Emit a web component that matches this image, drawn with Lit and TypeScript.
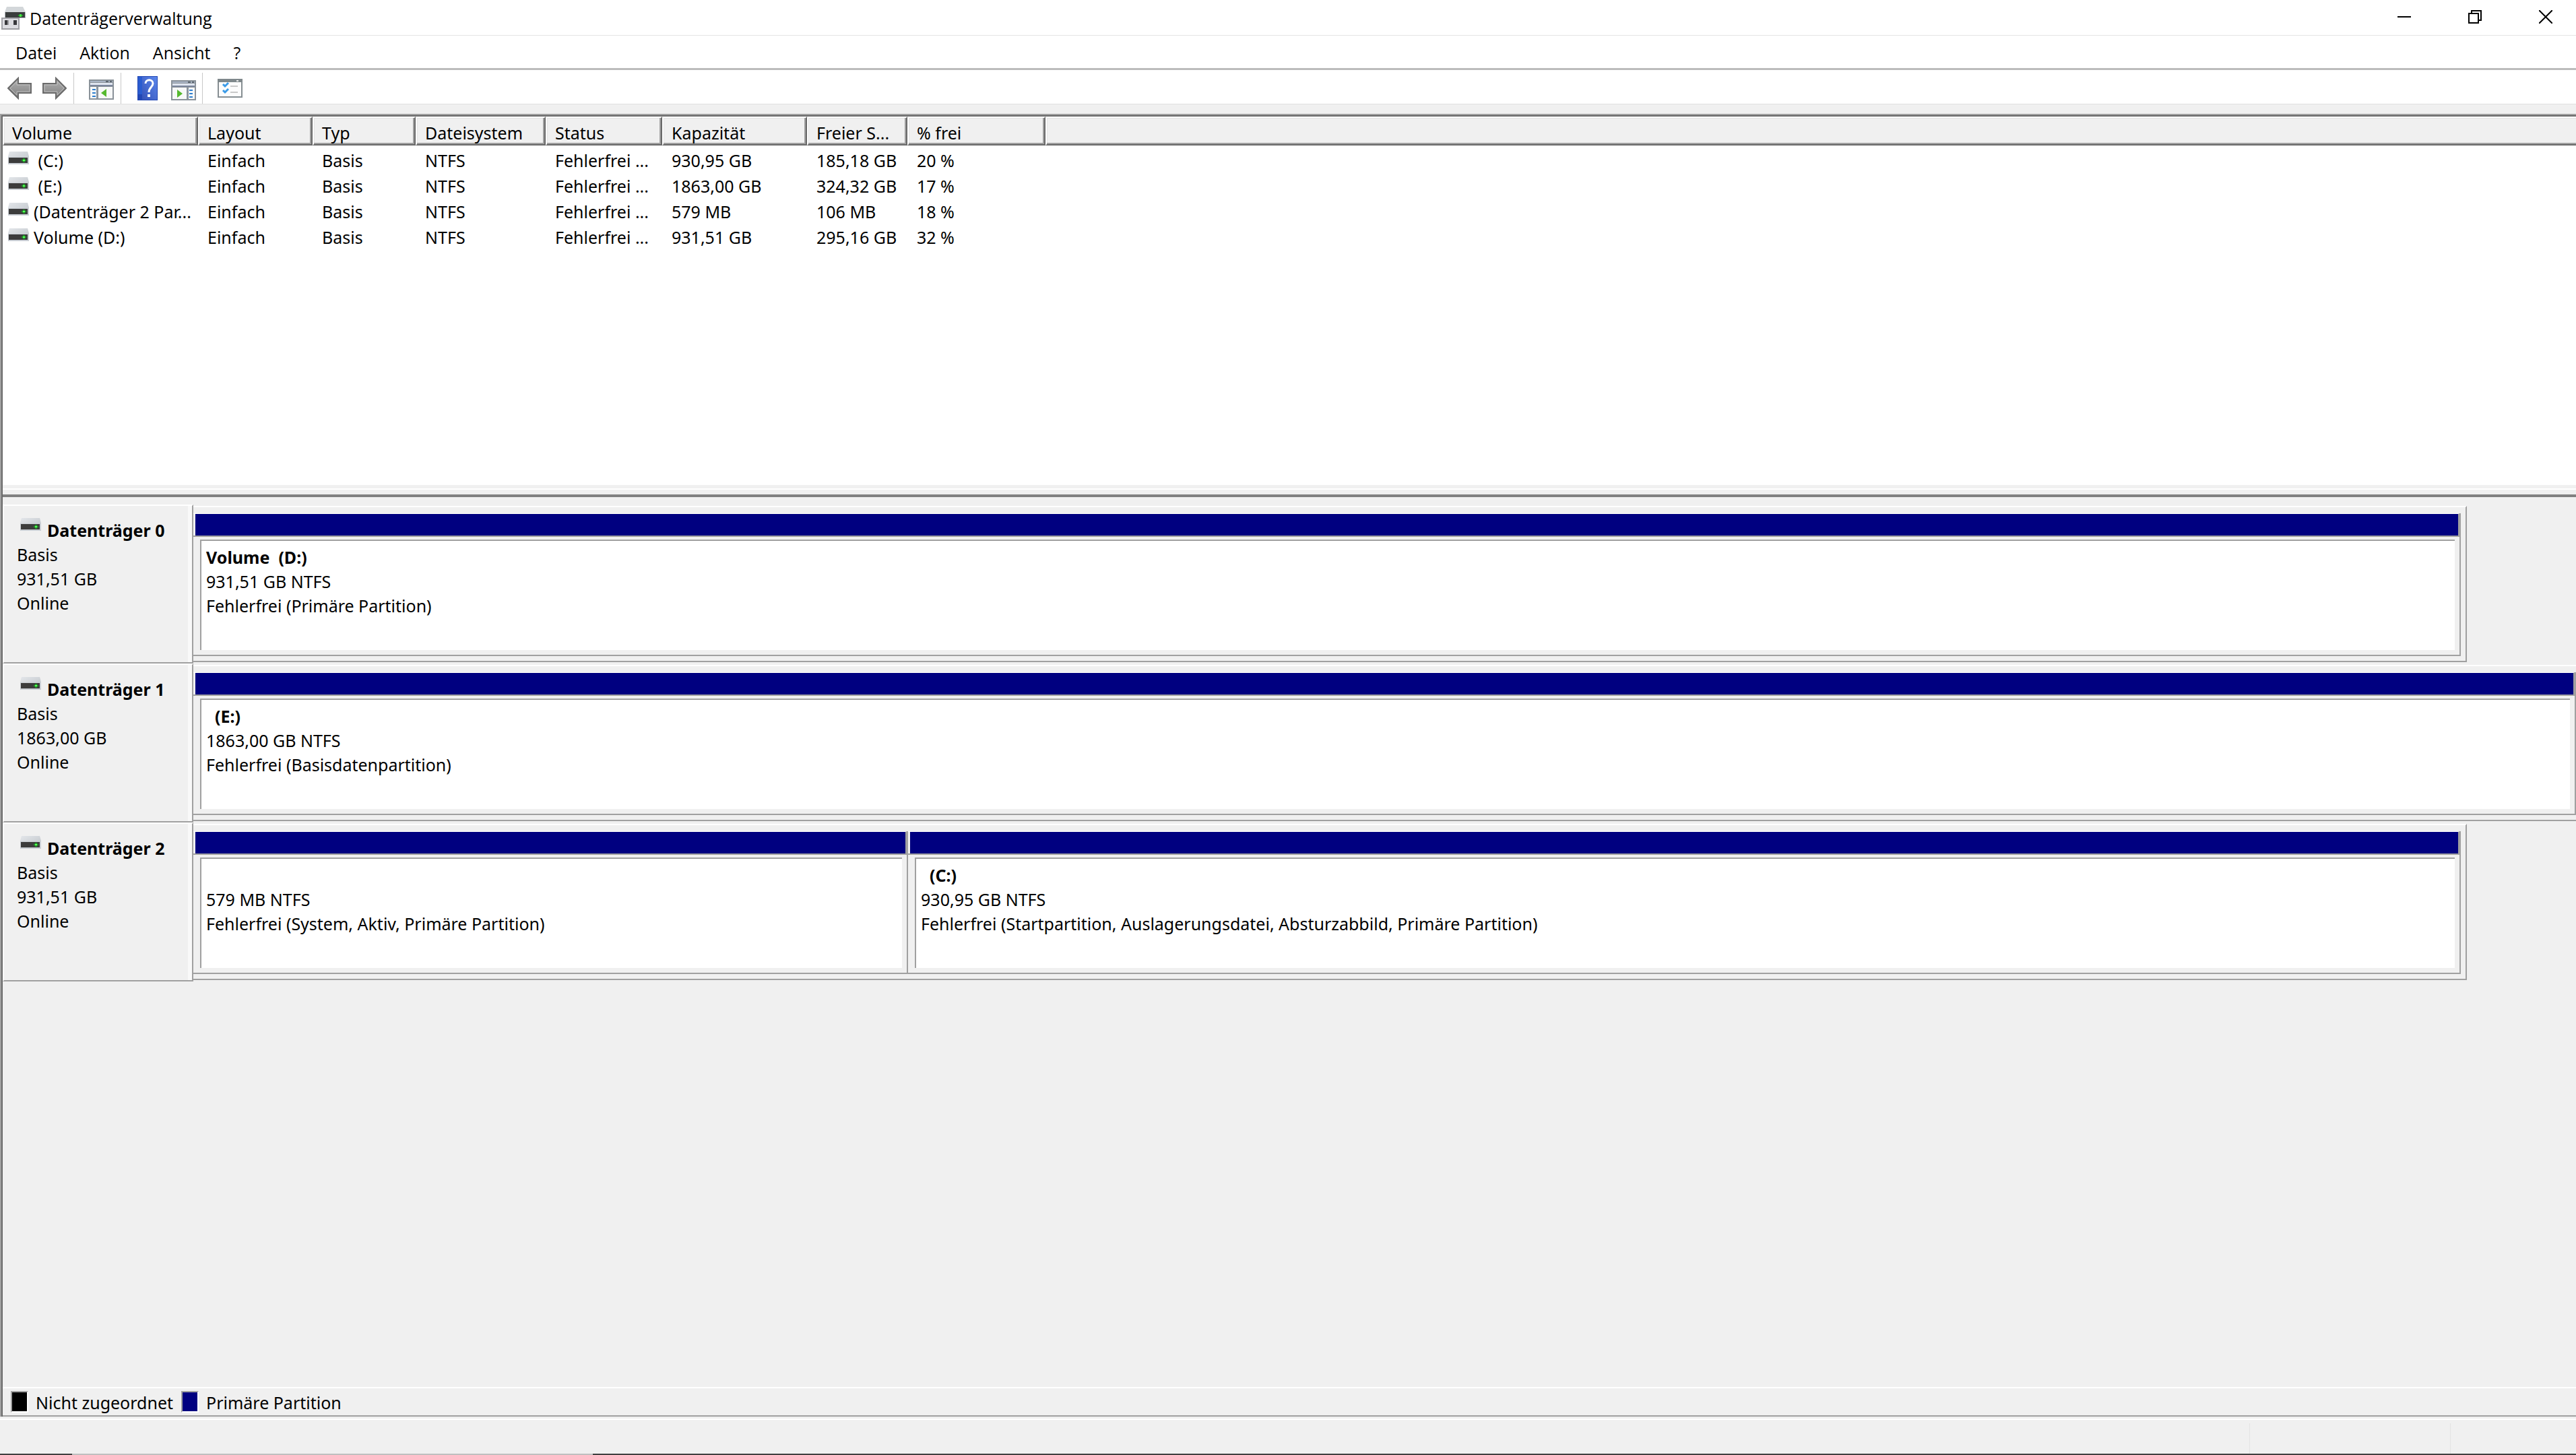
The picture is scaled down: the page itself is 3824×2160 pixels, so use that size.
import { LitElement, html, css, svg } from "lit";
import { customElement, property } from "lit/decorators.js";

interface Volume {
  name: string;
  layout: string;
  type: string;
  fs: string;
  status: string;
  capacity: string;
  free: string;
  percent: string;
}

interface Partition {
  title: string;
  size: string;
  status: string;
  share: number;
}

interface Disk {
  name: string;
  type: string;
  size: string;
  state: string;
  full: boolean;
  partitions: Partition[];
}

const COLUMNS = ["Volume", "Layout", "Typ", "Dateisystem", "Status", "Kapazität", "Freier S...", "% frei"];

const VOLUMES: Volume[] = [
  { name: "\u00a0(C:)", layout: "Einfach", type: "Basis", fs: "NTFS", status: "Fehlerfrei ...", capacity: "930,95 GB", free: "185,18 GB", percent: "20 %" },
  { name: "\u00a0(E:)", layout: "Einfach", type: "Basis", fs: "NTFS", status: "Fehlerfrei ...", capacity: "1863,00 GB", free: "324,32 GB", percent: "17 %" },
  { name: "(Datenträger 2 Par...", layout: "Einfach", type: "Basis", fs: "NTFS", status: "Fehlerfrei ...", capacity: "579 MB", free: "106 MB", percent: "18 %" },
  { name: "Volume (D:)", layout: "Einfach", type: "Basis", fs: "NTFS", status: "Fehlerfrei ...", capacity: "931,51 GB", free: "295,16 GB", percent: "32 %" },
];

const DISKS: Disk[] = [
  {
    name: "Datenträger 0", type: "Basis", size: "931,51 GB", state: "Online", full: false,
    partitions: [{ title: "Volume\u00a0\u00a0(D:)", size: "931,51 GB NTFS", status: "Fehlerfrei (Primäre Partition)", share: 1000 }],
  },
  {
    name: "Datenträger 1", type: "Basis", size: "1863,00 GB", state: "Online", full: true,
    partitions: [{ title: "\u00a0\u00a0(E:)", size: "1863,00 GB NTFS", status: "Fehlerfrei (Basisdatenpartition)", share: 1000 }],
  },
  {
    name: "Datenträger 2", type: "Basis", size: "931,51 GB", state: "Online", full: false,
    partitions: [
      { title: "\u00a0", size: "579 MB NTFS", status: "Fehlerfrei (System, Aktiv, Primäre Partition)", share: 315 },
      { title: "\u00a0\u00a0(C:)", size: "930,95 GB NTFS", status: "Fehlerfrei (Startpartition, Auslagerungsdatei, Absturzabbild, Primäre Partition)", share: 685 },
    ],
  },
];

const driveIcon = html`<svg class="drive" viewBox="0 0 32 20" width="32" height="20" aria-hidden="true">
  <defs><linearGradient id="top" x1="0" x2="1" y1="0" y2="1"><stop offset="0" stop-color="#e3e6ea"></stop><stop offset="1" stop-color="#bfc4c9"></stop></linearGradient></defs>
  <path d="M2 0H29L31 7V18H0V7Z" fill="url(#top)"></path>
  <rect x="0" y="8" width="31" height="11" fill="#c9ced4"></rect>
  <rect x="1" y="9" width="28" height="8" fill="#3c3c3c"></rect>
  <rect x="20" y="12" width="7" height="2" fill="#1f9a26"></rect>
  <rect x="22" y="10" width="3" height="6" fill="#1f9a26"></rect>
  <rect x="22" y="12" width="3" height="2" fill="#5dff5d"></rect>
</svg>`;

const appIcon = html`<svg width="36" height="35" viewBox="0 0 36 35" aria-hidden="true">
  <path d="M8 0H32L36 8V17H5V8Z" fill="#d3d7da"></path>
  <path d="M5 8H36V17H5Z" fill="#b4b9bd"></path>
  <rect x="6" y="8" width="29" height="8" fill="#3a3d3d"></rect>
  <rect x="25" y="12" width="7" height="2" fill="#1f9a26"></rect>
  <rect x="27" y="11" width="3" height="4" fill="#43e843"></rect>
  <path d="M0 16H27V34H0Z" fill="#a2a2a8"></path>
  <path d="M2 18H25V32H2Z" fill="#dcdce1"></path>
  <rect x="5" y="20" width="5" height="7" fill="#38383c"></rect>
  <rect x="9" y="20" width="2" height="7" fill="#98989c"></rect>
  <rect x="18" y="20" width="5" height="7" fill="#38383c"></rect>
  <rect x="0" y="32" width="27" height="2" fill="#9d9da2"></rect>
</svg>`;

const arrow = (flip: boolean) => html`<svg width="36" height="34" viewBox="0 0 36 34" aria-hidden="true">
  <defs><linearGradient id="ar" x1="0" x2="0" y1="0" y2="1"><stop offset="0" stop-color="#b2b2b2"></stop><stop offset="1" stop-color="#7f7f7f"></stop></linearGradient></defs>
  <g transform=${flip ? "translate(36 0) scale(-1 1)" : "translate(0 0)"}>
    <path d="M1 17L16 2V10H35V24H16V32Z" fill="url(#ar)" stroke="#6b6b6b" stroke-width="2"></path>
    <path d="M4 17L14 7V12H33V22H14V27Z" fill="none" stroke="#bdbdbd" stroke-width="1"></path>
  </g>
</svg>`;

const paneIcon = (right: boolean) => {
  const side = right ? 22 : 0;
  const arrowPath = right ? "M9 14L17 20L9 26Z" : "M26 14L18 20L26 26Z";
  return html`<svg width="37" height="30" viewBox="0 0 37 30" aria-hidden="true">
    <rect x="0" y="0" width="37" height="30" fill="#8a9299"></rect>
    <rect x="2" y="2" width="33" height="2" fill="#a9b5c6"></rect>
    <rect x="25" y="2" width="4" height="2" fill="#5c6670"></rect>
    <rect x="31" y="2" width="3" height="2" fill="#5c6670"></rect>
    <rect x="2" y="5" width="33" height="3" fill="#dfe5f0"></rect>
    <rect x="2" y="8" width="33" height="2" fill="#7b869c"></rect>
    <rect x="2" y="11" width="33" height="17" fill="#f7f8f8"></rect>
    <rect x=${right ? 23 : 11} y="11" width="3" height="17" fill="#8b949e"></rect>
    ${[14, 19, 24].map((y) => svg`<rect x=${side + 5} y=${y} width="5" height="2" fill="#2f7fd0"></rect>`)}
    <path d=${arrowPath} fill="#55b92e"></path>
  </svg>`;
};

const helpIcon = html`<svg width="30" height="36" viewBox="0 0 30 36" aria-hidden="true">
  <defs><linearGradient id="hb" x1="0" x2="1" y1="1" y2="0"><stop offset="0" stop-color="#3653b8"></stop><stop offset="1" stop-color="#5a86ec"></stop></linearGradient></defs>
  <rect x="0" y="0" width="30" height="36" fill="#2247b4"></rect>
  <rect x="7" y="1" width="22" height="34" fill="url(#hb)"></rect>
  <rect x="1" y="1" width="6" height="26" fill="#2a5cd0"></rect>
  <path d="M12 11C12 4 23 4 23 11C23 16 17 17 17 24" fill="none" stroke="#fff" stroke-width="3"></path>
  <rect x="15" y="27" width="4" height="4" fill="#fff"></rect>
</svg>`;

const listIcon = html`<svg width="37" height="28" viewBox="0 0 37 28" aria-hidden="true">
  <rect x="1" y="1" width="35" height="26" fill="#fcfcfc" stroke="#868e92" stroke-width="2"></rect>
  <rect x="0" y="0" width="37" height="5" fill="#7f888b"></rect>
  <rect x="28" y="2" width="3" height="2" fill="#e8e8e8"></rect>
  <path d="M8 8L11 11L16 6M8 17L11 20L16 15" fill="none" stroke="#3a9be8" stroke-width="3"></path>
  <rect x="19" y="10" width="11" height="2" fill="#c9c9c9"></rect>
  <rect x="19" y="19" width="11" height="2" fill="#c9c9c9"></rect>
</svg>`;

@customElement("disk-row")
export class DiskRow extends LitElement {
  @property({ attribute: false }) disk!: Disk;

  static styles = css`
    :host { display: grid; grid-template-columns: 283px 1fr; height: 236px; }
    svg { display: block; flex: none; }
    .label {
      box-sizing: border-box;
      border-top: 2px solid #fff;
      border-bottom: 2px solid #a0a0a0;
      border-left: 2px solid #fff;
      border-right: 2px solid #a0a0a0;
      padding: 18px 0 0 19px;
      line-height: 36px;
      box-shadow: inset -6px 0 0 #f9f9f9;
    }
    .name { display: flex; gap: 8px; font-weight: 700; margin: 0; font-size: inherit; white-space: nowrap; }
    .drive { margin: 0 0 0 5px; }
    .track {
      box-sizing: border-box;
      display: flex;
      margin: 2px 162px 2px 0;
      border-top: 2px solid #fff;
      border-right: 2px solid #a0a0a0;
      border-bottom: 2px solid #a0a0a0;
      padding: 9px 7px 7px 0;
    }
    .track.full { margin-right: 0; border-right: 0; padding-right: 0; }
    .part {
      box-sizing: border-box;
      display: flex;
      flex-direction: column;
      flex-basis: 0;
      min-width: 0;
      border-right: 2px solid #a0a0a0;
      border-bottom: 2px solid #a0a0a0;
    }
    .bar {
      height: 32px;
      padding: 0 0 0 3px;
      background: #000080 content-box;
      border-right: 2px solid #a0a0a0;
      border-top: 1px solid #fff;
      border-bottom: 2px solid #a0a0a0;
    }
    .body {
      flex: 1;
      margin: 4px 7px 7px 10px;
      background: #fff;
      border-top: 2px solid #a0a0a0;
      border-left: 2px solid #a0a0a0;
      padding: 6px 0 0 7px;
      line-height: 36px;
      white-space: nowrap;
      overflow: hidden;
    }
    .title { font-weight: 700; }
  `;

  render() {
    const d = this.disk;
    return html`
      <div class="label">
        <h2 class="name">${driveIcon}<span>${d.name}</span></h2>
        <div>${d.type}</div>
        <div>${d.size}</div>
        <div>${d.state}</div>
      </div>
      <div class="track ${d.full ? "full" : ""}">
        ${d.partitions.map((p) => html`
          <section class="part" style="flex-grow:${p.share}">
            <div class="bar"></div>
            <div class="body">
              <div class="title">${p.title}</div>
              <div>${p.size}</div>
              <div>${p.status}</div>
            </div>
          </section>`)}
      </div>
    `;
  }
}

@customElement("app-root")
export class AppRoot extends LitElement {
  static styles = css`
    :host {
      display: flex;
      flex-direction: column;
      min-height: 100vh;
      box-sizing: border-box;
      background: #f0f0f0;
      color: #000;
      font: 25px/38px "Noto Sans", "Open Sans", sans-serif;
    }
    button { font: inherit; color: inherit; background: none; border: 0; padding: 0; margin: 0; }
    svg { display: block; flex: none; }
    .titlebar, .menu { font-family: "Open Sans", "Noto Sans", sans-serif; }
    .titlebar { display: flex; align-items: center; height: 52px; background: #fff; border-bottom: 1px solid #e5e5e5; }
    .titlebar h1 { flex: 1; font-size: inherit; font-weight: 400; margin: 0; padding: 2px 0 0 6px; }
    .appicon { padding: 2px 0 0 2px; }
    .win { width: 105px; height: 50px; display: grid; place-items: center; }
    .wins { display: flex; align-self: flex-start; margin-right: -7px; }
    .menu { display: flex; height: 48px; background: #fff; border-bottom: 3px solid #bcbcbc; padding-left: 6px; }
    .menu button { padding: 2px 17px 0; }
    .tools { box-sizing: border-box; display: flex; align-items: center; height: 51px; background: #fff; border-bottom: 1px solid #e0e0e0; padding: 3px 0 0 11px; }
    .group { display: flex; align-items: center; }
    .nav { gap: 16px; padding-right: 10px; }
    .view { padding: 4px 10px 0 22px; }
    .help { gap: 20px; padding: 0 9px 0 24px; }
    .low { padding-top: 6px; }
    .last { padding-left: 22px; }
    .sep { width: 1px; height: 46px; background: #c8c8c8; }
    .main {
      flex: 1;
      display: flex;
      flex-direction: column;
      margin-top: 14px;
      border-top: 2px solid #a0a0a0;
      border-left: 2px solid #a0a0a0;
    }
    .frame { flex: 1; display: flex; flex-direction: column; border-top: 2px solid #696969; border-left: 2px solid #696969; }
    .list { height: 547px; background: #fff; }
    table { border-collapse: separate; border-spacing: 0; table-layout: fixed; width: 100%; }
    th {
      box-sizing: border-box;
      height: 43px;
      padding: 5px 0 0 12px;
      font-weight: 400;
      text-align: left;
      line-height: 32px;
      background: #f0f0f0;
      border-top: 2px solid #fff;
      border-left: 2px solid #fff;
      border-right: 2px solid #696969;
      border-bottom: 2px solid #696969;
      box-shadow: inset -2px -2px 0 #a0a0a0, inset 1px 1px 0 #e3e3e3;
      white-space: nowrap;
    }
    th:last-child { border-right: 0; box-shadow: inset 0 -2px 0 #a0a0a0, inset 1px 1px 0 #e3e3e3; }
    td { height: 38px; padding: 0 0 0 14px; line-height: 38px; white-space: nowrap; }
    tbody::before { content: ""; display: block; height: 3px; }
    td:first-child { padding-left: 8px; }
    .vol { display: flex; gap: 6px; }
    .vol svg { margin-top: 6px; }
    .c0 { width: 290px; } .c1 { width: 170px; } .c2 { width: 153px; } .c3 { width: 193px; }
    .c4 { width: 173px; } .c5 { width: 215px; } .c6 { width: 149px; } .c7 { width: 205px; }
    .splitter { height: 7px; border-top: 2px solid #fff; border-bottom: 4px solid #808080; background: #f0f0f0; background-clip: padding-box; box-shadow: 0 -5px 0 #f0f0f0; margin-top: 5px; }
    .disks { flex: 1; padding-top: 11px; }
    .legend { display: flex; align-items: center; height: 40px; border-top: 2px solid #fff; border-bottom: 2px solid #a0a0a0; padding-left: 12px; }
    .swatch { box-sizing: border-box; width: 26px; height: 32px; border: 2px solid #fff; border-top-color: #a0a0a0; border-left-color: #a0a0a0; }
    .black { background: #000; }
    .navy { background: #000080; }
    .legend span { padding: 2px 12px 0 11px; }
    .status { display: flex; justify-content: flex-end; align-items: flex-end; height: 50px; border-top: 2px solid #fff; margin-top: 3px; }
    .cell { border-left: 1px solid #e3e3e3; height: 45px; width: 297px; }
    .small { width: 186px; }
    .edge { display: grid; grid-template-columns: 107px 773fr 2944fr; height: 2px; background: #404040; }
    .lit { grid-column: 2; background: #bfbfbf; }
  `;

  render() {
    return html`
      <header class="titlebar">
        <div class="appicon">${appIcon}</div>
        <h1>Datenträgerverwaltung</h1>
        <div class="wins">
          <button class="win" aria-label="Minimieren"><svg width="20" height="20" aria-hidden="true"><rect y="9" width="20" height="2"></rect></svg></button>
          <button class="win" aria-label="Wiederherstellen"><svg width="20" height="20" fill="none" stroke="#000" stroke-width="2" aria-hidden="true"><path d="M1 5H15V19H1ZM5 5V1H19V15H15"></path></svg></button>
          <button class="win" aria-label="Schließen"><svg width="20" height="20" stroke="#000" stroke-width="2" aria-hidden="true"><path d="M0 0L20 20M20 0L0 20"></path></svg></button>
        </div>
      </header>
      <nav class="menu">
        <button>Datei</button><button>Aktion</button><button>Ansicht</button><button>?</button>
      </nav>
      <div class="tools" role="toolbar">
        <div class="group nav">
          <button aria-label="Zurück">${arrow(false)}</button>
          <button aria-label="Vorwärts">${arrow(true)}</button>
        </div>
        <div class="sep"></div>
        <div class="group view"><button aria-label="Struktur">${paneIcon(false)}</button></div>
        <div class="sep"></div>
        <div class="group help">
          <button aria-label="Hilfe">${helpIcon}</button>
          <button class="low" aria-label="Bereich">${paneIcon(true)}</button>
        </div>
        <div class="sep"></div>
        <div class="group last"><button aria-label="Liste">${listIcon}</button></div>
      </div>
      <main class="main">
        <div class="frame">
          <div class="list">
            <table>
              <colgroup>${COLUMNS.map((_, i) => html`<col class="c${i}">`)}<col></colgroup>
              <thead><tr>${COLUMNS.map((c) => html`<th>${c}</th>`)}<th></th></tr></thead>
              <tbody>
                ${VOLUMES.map((v) => html`<tr>
                  <td><div class="vol">${driveIcon}<span>${v.name}</span></div></td>
                  <td>${v.layout}</td><td>${v.type}</td><td>${v.fs}</td><td>${v.status}</td>
                  <td>${v.capacity}</td><td>${v.free}</td><td>${v.percent}</td><td></td>
                </tr>`)}
              </tbody>
            </table>
          </div>
          <div class="splitter"></div>
          <div class="disks">${DISKS.map((d) => html`<disk-row .disk=${d}></disk-row>`)}</div>
          <div class="legend">
            <i class="swatch black"></i><span>Nicht zugeordnet</span>
            <i class="swatch navy"></i><span>Primäre Partition</span>
          </div>
        </div>
      </main>
      <footer class="status"><div class="cell"></div><div class="cell small"></div></footer>
      <div class="edge"><div class="lit"></div></div>
    `;
  }
}
